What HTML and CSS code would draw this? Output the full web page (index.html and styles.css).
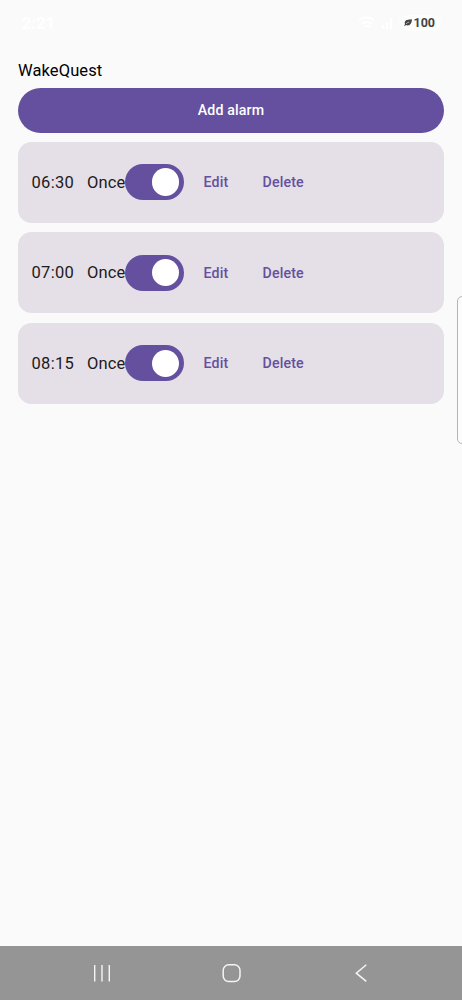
FILE: index.html
```html
<!DOCTYPE html>
<html lang="en">
<head>
<meta charset="utf-8">
<title>WakeQuest</title>
<link rel="stylesheet" href="styles.css">
</head>
<body>
<div class="screen">
  <header class="status">
    <span class="clock">2:21</span>
    <div class="indicators">
      <svg class="signal" width="38" height="14" viewBox="0 0 38 14" fill="none" stroke="#fff" stroke-width="2"><path d="M1 4q7-5 15 0M4 8q5-4 10 0M7 11q2-2 5 0M25 13V9M29 13V6M33 13V2"/></svg>
      <div class="battery">
        <svg width="8" height="8" viewBox="0 0 8 8"><path d="M8 .3C4 .8 1 .6.7 3.7L1 5.2 0 6.7h1.2l.8-.6C6 7.5 7.8 4.3 8 .3Z" fill="#444"/><path d="M2 5Q3 3.6 5.2 3" stroke="#fff" stroke-width=".6" fill="none"/></svg>
        <span>100</span>
      </div>
    </div>
  </header>
  <main class="content">
    <h1 class="title">WakeQuest</h1>
    <button class="add">Add alarm</button>
    <div class="alarms">
      <section class="card"><span class="time">06:30</span><span class="repeat">Once</span><span class="switch"><span class="thumb"></span></span><a class="action edit">Edit</a><a class="action">Delete</a></section>
      <section class="card"><span class="time">07:00</span><span class="repeat">Once</span><span class="switch"><span class="thumb"></span></span><a class="action edit">Edit</a><a class="action">Delete</a></section>
      <section class="card"><span class="time">08:15</span><span class="repeat">Once</span><span class="switch"><span class="thumb"></span></span><a class="action edit">Edit</a><a class="action">Delete</a></section>
    </div>
  </main>
  <div class="edge-handle"></div>
  <nav class="navbar">
    <svg width="20" height="20" viewBox="0 0 20 20" stroke="#f5f5f5" stroke-width="1.4"><path d="M2.7 2v16.5M10 2v16.5M17.3 2v16.5"/></svg>
    <svg width="20" height="20" viewBox="0 0 20 20" fill="none" stroke="#f5f5f5" stroke-width="1.5"><rect x="1.2" y="1.8" width="16.8" height="16.8" rx="5.5"/></svg>
    <svg width="20" height="20" viewBox="0 0 20 20" fill="none" stroke="#f5f5f5" stroke-width="1.5"><path d="M15.3 1.8 5.3 10.2l10 8.2"/></svg>
  </nav>
</div>
</body>
</html>
```
FILE: styles.css
```css
* { box-sizing: border-box; }
body { margin: 0; background: #fafafa; font-family: Roboto, sans-serif; color: #1d1b20; }
.screen { position: relative; display: flex; flex-direction: column; height: 1000px; overflow: hidden; }
.status { display: flex; justify-content: space-between; align-items: center; height: 46px; padding: 0 21px 0 22px; flex: none; }
.clock { font-size: 16px; font-weight: 700; color: #fff; letter-spacing: .3px; }
.indicators { display: flex; align-items: center; gap: 3px; }
.battery { display: flex; align-items: center; gap: 1px; height: 16px; padding: 0 6px 0 5px; border-radius: 8px; background: #fdfdfd; color: #444; font-size: 12.5px; font-weight: 700; line-height: 16px; }
.content { flex: 1; padding: 12.5px 18px 0; }
.title { margin: 0; font-size: 16.5px; font-weight: 400; line-height: 24px; height: 29px; letter-spacing: .1px; color: #000; }
.add { display: block; width: 100%; height: 45px; border: 0; border-radius: 23px; background: #64509e; color: #fff; font: 500 14.2px/45px Roboto, sans-serif; letter-spacing: .15px; padding: 0; }
.alarms { display: flex; flex-direction: column; gap: 9.2px; margin-top: 9px; }
.card { display: flex; align-items: center; height: 81.4px; padding-left: 13.5px; border-radius: 13.5px; background: #e5dfe7; font-size: 16.5px; letter-spacing: .3px; }
.time { width: 55.6px; }
.repeat { width: 38px; white-space: nowrap; letter-spacing: .1px; }
.switch { display: flex; align-items: center; justify-content: flex-end; width: 58.5px; height: 36px; padding-right: 4.5px; border-radius: 18px; background: #64509e; }
.thumb { width: 27.4px; height: 27.4px; border-radius: 50%; background: #fff; }
.action { font-size: 14.2px; font-weight: 500; letter-spacing: .12px; color: #64509e; }
.edit { width: 59px; margin-left: 20px; }
.edge-handle { position: absolute; left: 456.5px; top: 296px; width: 12px; height: 148px; border: 1.5px solid #b5b5b5; border-radius: 5px; background: #fcfcfc; }
.navbar { display: flex; align-items: center; justify-content: space-between; height: 54px; padding: 0 91px 0 92px; background: #959595; flex: none; }
```
